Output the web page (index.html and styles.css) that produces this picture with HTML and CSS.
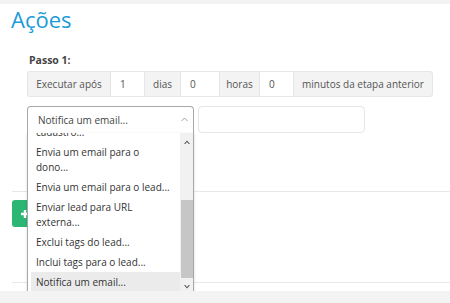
FILE: index.html
```html
<!DOCTYPE html>
<html lang="pt">
<head>
    <meta charset="UTF-8">
    <title>Ações</title>
    <link rel="stylesheet" href="styles.css">
</head>
<body>
    <div class="page">
        <h1 class="title">Ações</h1>

        <div class="step">
            <div class="step-label">Passo 1:</div>

            <!-- intervalo da etapa -->
            <div class="input-group">
                <span class="addon addon-first w-exec">Executar após</span>
                <input class="num w-days" type="text" value="1">
                <span class="addon w-dias">dias</span>
                <input class="num w-hours" type="text" value="0">
                <span class="addon w-horas">horas</span>
                <input class="num w-min" type="text" value="0">
                <span class="addon addon-last w-rest">minutos da etapa anterior</span>
            </div>

            <div class="action-row">
                <div class="select-wrap">
                    <div class="select">
                        <span>Notifica um email...</span>
                        <svg class="select-caret" width="7" height="5" viewBox="0 0 7 5">
                            <path d="M0.5 4 L3.5 1 L6.5 4" fill="none" stroke="#a0a0a0" stroke-width="1"/>
                        </svg>
                    </div>

                    <!-- lista aberta do select -->
                    <div class="listbox">
                        <div class="options">
                            <ul class="option-list">
                                <li>cadastro...</li>
                                <li>Envia um email para o<br>dono...</li>
                                <li>Envia um email para o lead...</li>
                                <li>Enviar lead para URL<br>externa...</li>
                                <li>Exclui tags do lead...</li>
                                <li>Inclui tags para o lead...</li>
                                <li class="selected">Notifica um email...</li>
                            </ul>
                        </div>
                        <div class="scrollbar">
                            <div class="scroll-btn">
                                <svg width="6" height="4" viewBox="0 0 6 4"><path d="M0 4 L3 0.5 L6 4 L4.8 4 L3 2 L1.2 4 Z" fill="#505050"/></svg>
                            </div>
                            <div class="scroll-thumb"></div>
                            <div class="scroll-btn scroll-btn-down">
                                <svg width="6" height="4" viewBox="0 0 6 4"><path d="M0 0 L3 3.5 L6 0 L4.8 0 L3 2 L1.2 0 Z" fill="#505050"/></svg>
                            </div>
                        </div>
                    </div>
                </div>
                <input class="text-input" type="text">
            </div>
        </div>

        <div class="footer">
            <button type="button" class="add-btn" aria-label="Adicionar passo">
                <svg width="8" height="8" viewBox="0 0 8 8"><path d="M4 0 V8 M0 4 H8" stroke="#fff" stroke-width="2.4"/></svg>
            </button>
        </div>
    </div>
</body>
</html>
```

FILE: styles.css
```css
body {
    margin: 0;
    background: #f3f3f3;
    font-family: "Open Sans", "Liberation Sans", Arial, sans-serif;
    color: #555;
}

.page {
    background: #fff;
    padding-bottom: 8px;
}

.title {
    margin: 4px 0 0 0;
    padding-left: 11px;
    font-size: 22px;
    line-height: 30px;
    font-weight: 400;
    color: #1b9bd8;
}

.step {
    padding-left: 27px;
}
.step-label {
    margin: 19px 0 3px 2px;
    font-size: 10.5px;
    line-height: 15px;
    font-weight: 700;
    color: #444;
}

.input-group {
    display: flex;
    height: 26px;
    font-size: 10px;
}
.addon,
.num {
    box-sizing: border-box;
    height: 26px;
    border: 1px solid #e6e6e6;
    border-right: none;
}
.addon {
    display: flex;
    align-items: center;
    justify-content: center;
    background: #f3f3f3;
    color: #555;
    white-space: nowrap;
}
.addon-first {
    border-radius: 3px 0 0 3px;
}
.addon-last {
    border-right: 1px solid #e6e6e6;
    border-radius: 0 3px 3px 0;
}
.num {
    margin: 0;
    padding: 0 0 0 9px;
    background: #fff;
    font: inherit;
    color: #555;
    outline: none;
}
.w-exec { width: 83px; }
.w-days { width: 34px; }
.w-dias { width: 36px; }
.w-hours { width: 39px; }
.w-horas { width: 40px; }
.w-min { width: 34px; }
.w-rest { width: 140px; }

.action-row {
    display: flex;
    gap: 4px;
    margin-top: 9px;
    font-size: 10px;
}
.select-wrap {
    position: relative;
    width: 167px;
}
.select {
    box-sizing: border-box;
    height: 27px;
    display: flex;
    align-items: center;
    justify-content: space-between;
    padding: 0 5px 0 10px;
    border: 1px solid #a8a8a8;
    border-bottom: none;
    border-radius: 4px 4px 0 0;
    color: #444;
}
.select-caret {
    margin-top: -1px;
}

.listbox {
    position: absolute;
    top: 27px;
    left: 0;
    z-index: 10;
    box-sizing: border-box;
    width: 167px;
    height: 163px;
    display: flex;
    background: #fff;
    border: 1px solid #a8a8a8;
    border-top: none;
    border-radius: 0 0 3px 3px;
    box-shadow: 0 1px 3px rgba(0,0,0,0.15);
    overflow: hidden;
}
.options {
    flex: 1;
    padding: 0 0 3px 3px;
    overflow: hidden;
}
.option-list {
    list-style: none;
    margin: -11px 0 0 0;
    padding: 0;
    color: #333;
}
.option-list li {
    padding: 2.5px 5px;
    line-height: 15px;
    white-space: nowrap;
}
.option-list li.selected {
    background: #ebebeb;
}

.scrollbar {
    width: 13px;
    display: flex;
    flex-direction: column;
    background: #f1f1f1;
}
.scroll-btn {
    height: 17px;
    display: flex;
    align-items: center;
    justify-content: center;
    padding-left: 1px;
}
.scroll-btn-down {
    margin-top: auto;
}
.scroll-thumb {
    margin: 50px 0 0 1px;
    height: 78px;
    background: #c6c6c6;
}

.text-input {
    box-sizing: border-box;
    width: 167px;
    height: 27px;
    margin: 0;
    border: 1px solid #e6e6e6;
    border-radius: 4px;
    outline: none;
}

.footer {
    box-sizing: border-box;
    height: 92px;
    margin: 58px 0 0 12px;
    padding-top: 8px;
    border-top: 1px solid #e8e8e8;
    border-bottom: 1px solid #e8e8e8;
}
.add-btn {
    width: 40px;
    height: 27px;
    display: flex;
    align-items: center;
    padding: 0 0 0 9px;
    border: none;
    border-radius: 3px;
    background: #2bb673;
}
```
